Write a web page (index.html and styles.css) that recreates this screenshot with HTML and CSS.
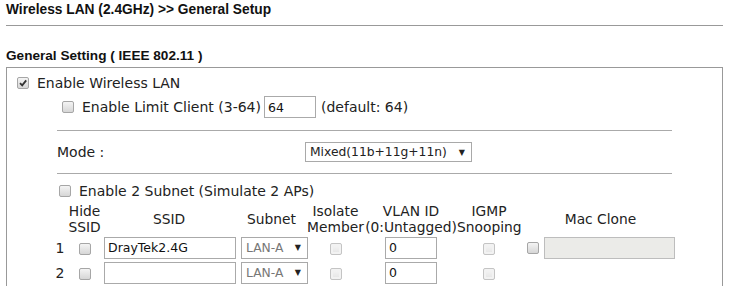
FILE: index.html
```html
<!DOCTYPE html>
<html lang="en">
<head>
  <meta charset="UTF-8">
  <title>Wireless LAN (2.4GHz) General Setup</title>
  <link rel="stylesheet" href="styles.css">
</head>
<body>
  <div class="title">Wireless LAN (2.4GHz) &gt;&gt; General Setup</div>
  <div class="title-rule"></div>

  <div class="section-title">General Setting ( IEEE 802.11 )</div>
  <div class="panel">
    <div class="row row-wlan">
      <span class="cb checked"><svg width="10" height="10" viewBox="0 0 10 10"><path d="M2 5.2 L4.2 7.4 L8.2 2.4" fill="none" stroke="#333" stroke-width="1.8"/></svg></span>
      <span>Enable Wireless LAN</span>
    </div>
    <div class="row row-limit">
      <span class="cb"></span>
      <span>Enable Limit Client (3-64)</span>
      <input class="txt txt-limit" type="text" value="64">
      <span>(default: 64)</span>
    </div>

    <div class="indent">
      <div class="rule"></div>
      <div class="row row-mode">
        <span class="mode-label">Mode :</span>
        <span class="select select-mode">Mixed(11b+11g+11n)<span class="arrow">&#9660;</span></span>
      </div>
      <div class="rule"></div>
      <div class="row row-subnet">
        <span class="cb"></span>
        <span>Enable 2 Subnet (Simulate 2 APs)</span>
      </div>

      <table class="ssid-table">
        <colgroup>
          <col class="c-num"><col class="c-hide"><col class="c-ssid"><col class="c-subnet">
          <col class="c-iso"><col class="c-vlan"><col class="c-igmp"><col class="c-mac">
        </colgroup>
        <tr class="head">
          <th></th>
          <th>Hide<br>SSID</th>
          <th>SSID</th>
          <th>Subnet</th>
          <th>Isolate<br>Member</th>
          <th>VLAN ID<br>(0:Untagged)</th>
          <th>IGMP<br>Snooping</th>
          <th>Mac Clone</th>
        </tr>
        <tr>
          <td>1</td>
          <td><span class="cb"></span></td>
          <td class="left"><input class="txt txt-ssid" type="text" value="DrayTek2.4G"></td>
          <td class="left"><span class="select select-lan">LAN-A<span class="arrow">&#9660;</span></span></td>
          <td><span class="cb off"></span></td>
          <td><input class="txt txt-vlan" type="text" value="0"></td>
          <td><span class="cb off"></span></td>
          <td class="mac"><span class="cb"></span><input class="txt txt-mac" type="text" disabled></td>
        </tr>
        <tr>
          <td>2</td>
          <td><span class="cb"></span></td>
          <td class="left"><input class="txt txt-ssid" type="text" value=""></td>
          <td class="left"><span class="select select-lan">LAN-A<span class="arrow">&#9660;</span></span></td>
          <td><span class="cb off"></span></td>
          <td><input class="txt txt-vlan" type="text" value="0"></td>
          <td><span class="cb off"></span></td>
          <td></td>
        </tr>
      </table>
    </div>
  </div>
</body>
</html>
```

FILE: styles.css
```css
body {
  margin: 0;
  font-family: "DejaVu Sans", Verdana, sans-serif;
  font-size: 14px;
  color: #222;
  background: #fff;
}
.title {
  font: bold 13.75px "Liberation Sans", Arial, sans-serif;
  line-height: 16px;
  padding: 2px 0 0 6px;
  color: #111;
}
.title-rule {
  margin: 7px 13px 0 6px;
  border-top: 1px solid #999;
}
.section-title {
  font: bold 13.6px "Liberation Sans", Arial, sans-serif;
  line-height: 16px;
  margin-top: 22px;
  padding-left: 6px;
  color: #111;
}
.panel {
  margin: 3px 13px 0 6px;
  height: 218px;
  border: 1px solid #999;
  border-bottom: none;
}
.row {
  display: flex;
  align-items: center;
  height: 24px;
}
.row-wlan {
  margin-top: 3px;
  padding-left: 10px;
}
.row-limit {
  padding-left: 55px;
}
.indent {
  margin-left: 50px;
  width: 615px;
}
.rule {
  border-top: 1px solid #aaa;
}
.indent .rule:first-child {
  margin-top: 11px;
}
.row-mode {
  height: 22px;
  margin: 10px 0;
}
.mode-label {
  width: 248px;
}
.row-subnet {
  height: 22px;
  margin-top: 6px;
  padding-left: 2px;
}

/* checkboxes */
.cb {
  display: inline-flex;
  align-items: center;
  justify-content: center;
  box-sizing: border-box;
  width: 12px;
  height: 12px;
  margin-right: 8px;
  border: 1px solid #a6a6a6;
  border-radius: 2px;
  background: linear-gradient(#f4f4f4, #d6d6d6);
  vertical-align: middle;
}
.cb.off {
  border-color: #c4c4c4;
  background: linear-gradient(#f6f6f6, #e4e4e4);
  box-shadow: inset 0 0 0 2px #f2f2f2;
  margin-right: 0;
}

/* text fields */
.txt {
  box-sizing: border-box;
  height: 22px;
  border: 1px solid #aaa;
  padding: 0 3px;
  font: 12.5px "DejaVu Sans", Verdana, sans-serif;
  color: #111;
  background: #fff;
  vertical-align: middle;
}
.txt-limit {
  width: 52px;
  margin: 0 5px 0 3px;
}
.txt-ssid {
  width: 132px;
}
.txt-vlan {
  width: 52px;
}
.txt-mac {
  width: 131px;
  margin-left: -3px;
  background: #ebebe8;
  border-color: #bdbdbd;
}

/* drop-downs */
.select {
  display: inline-flex;
  align-items: center;
  box-sizing: border-box;
  height: 20px;
  border: 1px solid #a9a9a9;
  padding: 0 6px 0 4px;
  font-size: 12.3px;
  background: #fff;
}
.select-mode {
  width: 167px;
}
.select-lan {
  width: 67px;
  height: 22px;
  color: #777;
  margin-left: 1px;
}
.arrow {
  margin-left: auto;
  font-size: 8px;
  color: #222;
}

/* subnet table */
.ssid-table {
  margin-left: -5px;
  border-collapse: collapse;
  table-layout: fixed;
  width: 628px;
}
.c-num { width: 16px; }
.c-hide { width: 33px; }
.c-ssid { width: 136px; }
.c-subnet { width: 69px; }
.c-iso { width: 59px; }
.c-vlan { width: 92px; }
.c-igmp { width: 64px; }
.c-mac { width: 159px; }
.ssid-table th {
  font-weight: normal;
  font-size: 13.8px;
  line-height: 16px;
  height: 33px;
  padding: 0;
  white-space: nowrap;
}
.ssid-table td {
  height: 25px;
  padding: 0;
  text-align: center;
}
.ssid-table td .cb {
  margin-right: 0;
}
.ssid-table td.left {
  text-align: left;
  padding-left: 3px;
}
.ssid-table td.mac {
  text-align: left;
  padding-left: 6px;
}
.ssid-table td.mac .cb {
  margin-right: 8px;
}
```
